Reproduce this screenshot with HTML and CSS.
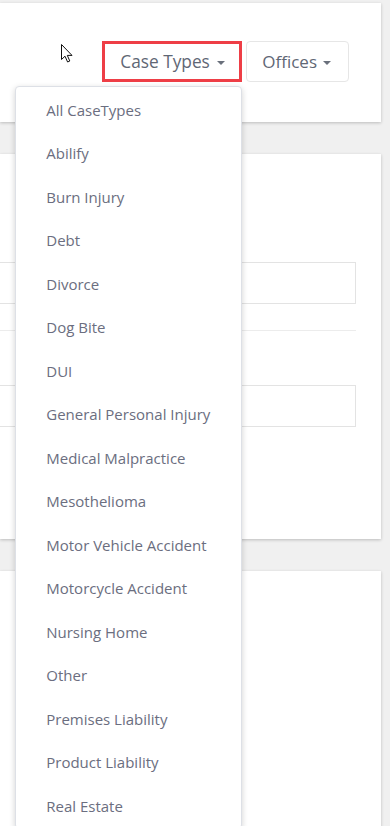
FILE: index.html
```html
<!DOCTYPE html>
<html lang="en">
<head>
<meta charset="utf-8">
<title>Case Types</title>
<link rel="stylesheet" href="styles.css">
</head>
<body>
<div class="page">
  <section class="card card-top">
    <svg class="cursor" width="13" height="19" viewBox="0 0 13 19" aria-hidden="true">
      <path d="M0.5 0.5 L0.5 15.5 L4 12.2 L6.6 18 L8.8 17 L6.3 11.4 L11 11.4 Z" fill="#fff" stroke="#111" stroke-width="1" stroke-linejoin="round"/>
    </svg>
    <div class="toolbar">
      <div class="dd">
        <button class="btn btn-highlight" type="button">Case Types<span class="caret"></span></button>
        <ul class="menu">
          <li>All CaseTypes</li>
          <li>Abilify</li>
          <li>Burn Injury</li>
          <li>Debt</li>
          <li>Divorce</li>
          <li>Dog Bite</li>
          <li>DUI</li>
          <li>General Personal Injury</li>
          <li>Medical Malpractice</li>
          <li>Mesothelioma</li>
          <li>Motor Vehicle Accident</li>
          <li>Motorcycle Accident</li>
          <li>Nursing Home</li>
          <li>Other</li>
          <li>Premises Liability</li>
          <li>Product Liability</li>
          <li>Real Estate</li>
        </ul>
      </div>
      <button class="btn" type="button">Offices<span class="caret"></span></button>
    </div>
  </section>
  <section class="card card-form">
    <div class="field"></div>
    <hr class="divider">
    <div class="field"></div>
  </section>
  <section class="card card-bottom"></section>
</div>
</body>
</html>
```
FILE: styles.css
```css
* { box-sizing: border-box; }
html, body { margin: 0; padding: 0; }
body {
  background: #f0f0f0;
  font-family: "Open Sans", "Noto Sans", sans-serif;
  overflow: hidden;
  height: 826px;
}
.page {
  display: flex;
  flex-direction: column;
  gap: 32px;
  padding: 3px 9px 0 0;
}
.card {
  background: #fff;
  box-shadow: 0 1px 3px rgba(0, 0, 0, 0.22);
}
.card-top {
  position: relative;
  height: 119px;
  padding: 38px 32px 0 0;
  z-index: 2;
}
.cursor {
  position: absolute;
  left: 61px;
  top: 41px;
}
.toolbar {
  display: flex;
  justify-content: flex-end;
  align-items: flex-start;
  gap: 4px;
}
.dd { position: relative; }
.btn {
  display: inline-flex;
  align-items: center;
  height: 41px;
  padding: 0 17px 0 15px;
  background: #fff;
  border: 1px solid #e6e6e6;
  border-radius: 4px;
  font-family: inherit;
  font-size: 17px;
  color: #5f6775;
  white-space: nowrap;
  cursor: pointer;
}
.btn-highlight {
  border: 3px solid #ee3e46;
  border-radius: 0;
  width: 140px;
  padding: 0 0 0 15px;
  font-size: 17.3px;
}
.caret {
  display: inline-block;
  width: 0;
  height: 0;
  margin-left: 6px;
  margin-top: 2px;
  border-left: 4px solid transparent;
  border-right: 4px solid transparent;
  border-top: 4px solid #6a707c;
}
.btn-highlight .caret { margin-left: 7px; }
.menu {
  position: absolute;
  top: calc(100% + 4px);
  left: -87px;
  width: 227px;
  margin: 0;
  padding: 1px 0 0;
  list-style: none;
  background: #fff;
  border: 1px solid #dde0e6;
  border-radius: 4px;
  box-shadow: 0 2px 6px rgba(0, 0, 0, 0.18);
}
.menu li {
  height: 43.5px;
  display: flex;
  align-items: center;
  padding: 0 30px;
  font-size: 15px;
  color: #6b6e80;
  white-space: nowrap;
}
.card-form {
  height: 385px;
  padding: 108px 25px 0 0;
}
.field {
  height: 42px;
  border: 1px solid #e3e3e3;
  border-left: none;
}
.divider {
  margin: 26px 0 54px;
  border: none;
  border-top: 1px solid #ececec;
}
.card-bottom {
  height: 300px;
}
```
